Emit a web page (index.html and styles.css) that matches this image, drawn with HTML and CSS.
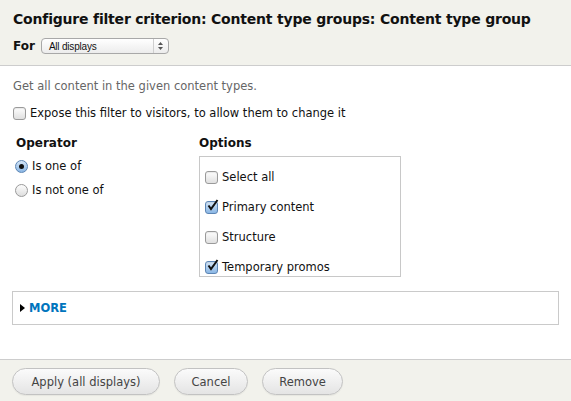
FILE: index.html
```html
<!DOCTYPE html>
<html>
<head>
<meta charset="utf-8">
<link rel="stylesheet" href="styles.css">
</head>
<body>
<div class="dialog">
  <div class="header">
    <h1 class="title">Configure filter criterion: Content type groups: Content type group</h1>
    <div class="for-row">
      <span class="for-label">For</span>
      <div class="select">
        <span class="select-text">All displays</span>
        <span class="select-arrows">
          <svg width="7" height="10" viewBox="0 0 7 10"><path d="M3.5 1 L6 4 L1 4 Z" fill="#555"/><path d="M3.5 9 L6 6 L1 6 Z" fill="#555"/></svg>
        </span>
      </div>
    </div>
  </div>
  <div class="body">
    <p class="desc">Get all content in the given content types.</p>
    <label class="check-row expose"><span class="cb"></span><span>Expose this filter to visitors, to allow them to change it</span></label>
    <div class="columns">
      <div class="operator">
        <div class="col-label">Operator</div>
        <div class="radios">
          <label class="radio-row"><span class="rb on"><span class="dot"></span></span><span>Is one of</span></label>
          <label class="radio-row"><span class="rb"></span><span>Is not one of</span></label>
        </div>
      </div>
      <div class="options">
        <div class="col-label">Options</div>
        <div class="options-box">
          <label class="check-row opt"><span class="cb"></span><span>Select all</span></label>
          <label class="check-row opt"><span class="cb on"><svg width="13" height="13" viewBox="0 0 13 13"><path d="M2.5 6.5 L5 10 L11.5 1" fill="none" stroke="#111" stroke-width="2"/></svg></span><span>Primary content</span></label>
          <label class="check-row opt"><span class="cb"></span><span>Structure</span></label>
          <label class="check-row opt"><span class="cb on"><svg width="13" height="13" viewBox="0 0 13 13"><path d="M2.5 6.5 L5 10 L11.5 1" fill="none" stroke="#111" stroke-width="2"/></svg></span><span>Temporary promos</span></label>
        </div>
      </div>
    </div>
    <div class="more">
      <svg class="tri" width="5" height="8" viewBox="0 0 5 8"><path d="M0 0 L5 4 L0 8 Z" fill="#000"/></svg>
      <span class="more-link">MORE</span>
    </div>
  </div>
  <div class="footer">
    <button class="btn btn-apply">Apply (all displays)</button>
    <button class="btn btn-cancel">Cancel</button>
    <button class="btn btn-remove">Remove</button>
  </div>
</div>
</body>
</html>
```
FILE: styles.css
```css
* { box-sizing: border-box; }
html, body { margin: 0; padding: 0; }
body {
  font-family: "DejaVu Sans", Verdana, sans-serif;
  font-size: 11.5px;
  color: #222;
  background: #fff;
  width: 571px;
  height: 401px;
  overflow: hidden;
}
.dialog {
  display: flex;
  flex-direction: column;
  height: 401px;
}
.header {
  background: #f2f2ec;
  border-bottom: 1px solid #cdcdcd;
  height: 66px;
  padding: 10px 13px 0 13px;
}
.title {
  margin: 0;
  font-size: 14px;
  font-weight: bold;
  color: #111;
  line-height: 18px;
  letter-spacing: -0.2px;
}
.for-row {
  display: flex;
  align-items: center;
  margin-top: 10px;
  gap: 6px;
}
.for-label {
  font-weight: bold;
  font-size: 12px;
  color: #111;
}
.select {
  width: 128px;
  height: 16px;
  border: 1px solid #a8a8a8;
  border-radius: 4px;
  background: linear-gradient(#ffffff, #ececec);
  display: flex;
  align-items: center;
  justify-content: space-between;
  padding: 0 0 0 7px;
  font-family: "Liberation Sans", Arial, sans-serif;
  font-size: 10px;
  letter-spacing: -0.2px;
  color: #111;
}
.select-arrows {
  width: 15px;
  height: 14px;
  border-left: 1px solid #cfcfcf;
  display: flex;
  align-items: center;
  justify-content: center;
}
.body {
  flex: 1;
  padding: 0 12px;
}
.desc {
  margin: 13px 0 0 1px;
  color: #666;
  font-size: 11.5px;
  line-height: 14px;
}
.check-row {
  display: flex;
  align-items: center;
  gap: 4px;
  font-size: 11.5px;
  color: #111;
}
.expose {
  margin-top: 13px;
  margin-left: 1px;
  line-height: 14px;
}
.cb {
  width: 13px;
  height: 13px;
  border: 1px solid #9a9a9a;
  border-radius: 3px;
  background: linear-gradient(#fdfdfd, #e0e0e0);
  flex: none;
  display: flex;
  align-items: center;
  justify-content: center;
  box-shadow: inset 0 1px 1px rgba(0,0,0,0.08);
}
.cb.on {
  background: linear-gradient(#d5e6f7, #8ab6e4);
  border-color: #5d86b5;
}
.cb svg { margin-top: -3px; margin-left: 1px; overflow: visible; }
.columns {
  display: flex;
  margin-top: 16px;
}
.operator {
  width: 187px;
  padding-left: 4px;
}
.col-label {
  font-weight: bold;
  font-size: 12px;
  color: #111;
  line-height: 15px;
}
.radios {
  margin-top: 3px;
}
.radio-row {
  display: flex;
  align-items: center;
  gap: 4px;
  font-size: 11.5px;
  color: #111;
  height: 24px;
  margin-left: -1px;
}
.rb {
  width: 13px;
  height: 13px;
  border: 1px solid #9a9a9a;
  border-radius: 50%;
  background: linear-gradient(#fdfdfd, #dedede);
  flex: none;
  display: flex;
  align-items: center;
  justify-content: center;
}
.rb.on {
  background: linear-gradient(#d5e6f7, #8ab6e4);
  border-color: #5d86b5;
}
.dot {
  width: 5px;
  height: 5px;
  border-radius: 50%;
  background: #111;
}
.options-box {
  margin-top: 5px;
  width: 202px;
  height: 121px;
  border: 1px solid #c8c8c8;
  padding: 13px 0 0 5px;
  display: flex;
  flex-direction: column;
  gap: 16px;
}
.opt { height: 14px; }
.more {
  margin-top: 14px;
  height: 34px;
  border: 1px solid #cacaca;
  display: flex;
  align-items: center;
  padding-left: 7px;
  gap: 4px;
}
.more-link {
  color: #0074bd;
  font-weight: bold;
  font-size: 11.5px;
}
.footer {
  background: #f2f2ec;
  border-top: 1px solid #cdcdcd;
  height: 42px;
  display: flex;
  align-items: flex-start;
  padding: 8px 0 0 12px;
  gap: 14px;
}
.btn {
  height: 27px;
  border: 1px solid #c2c2c2;
  border-radius: 14px;
  background: linear-gradient(#fbfbfb, #e4e4e4);
  font-family: "DejaVu Sans", Verdana, sans-serif;
  font-size: 11.5px;
  color: #444;
  padding: 0;
  box-shadow: 0 1px 1px rgba(0,0,0,0.05);
}
.btn-apply { width: 148px; }
.btn-cancel { width: 74px; }
.btn-remove { width: 81px; }
```
